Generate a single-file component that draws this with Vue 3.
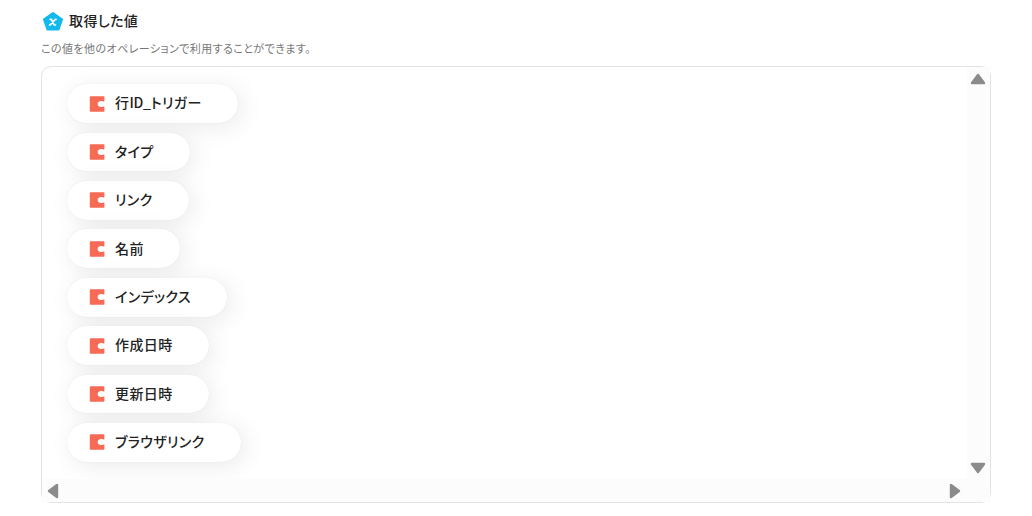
<script setup>
import { ref } from 'vue'

const values = ref([
  '行ID_トリガー',
  'タイプ',
  'リンク',
  '名前',
  'インデックス',
  '作成日時',
  '更新日時',
  'ブラウザリンク',
])

// Latin runs are set tighter than the Japanese text around them
const splitLatin = (text) => text.split(/([A-Za-z_]+)/).filter(Boolean)
const isLatin = (part) => /^[A-Za-z_]+$/.test(part)
</script>

<template>
  <section class="output">
    <header class="output-header">
      <svg class="output-icon" width="22" height="22" viewBox="0 0 22 22">
        <path
          d="M11 3.1 L19.9 9.3 L16.5 19.4 H5.5 L2.1 9.3 Z"
          fill="#12b9ec"
          stroke="#12b9ec"
          stroke-width="2.2"
          stroke-linejoin="round"
        />
        <path
          d="M8.2 9.3 H9.4 L12.2 15 H13.4 M14 9.3 H13.4 L8.2 15 H7.5"
          fill="none"
          stroke="#fff"
          stroke-width="1.7"
          stroke-linecap="round"
          stroke-linejoin="round"
        />
      </svg>
      <h2 class="output-title">取得した値</h2>
    </header>
    <p class="output-note">この値を他のオペレーションで利用することができます。</p>

    <div class="panel">
      <div class="panel-row">
        <ul class="value-list">
          <li v-for="value in values" :key="value" class="value-item">
            <svg class="value-icon" width="16" height="16" viewBox="0 0 16 16">
              <path
                d="M1.6 0.2 H14.7 Q15.4 0.2 15.4 0.9 V5.4 C14.3 5.4 13.6 4.9 12 4.9 C10 4.9 8.6 6.2 8.6 8 C8.6 9.8 10 11.1 12 11.1 C13.6 11.1 14.3 10.6 15.4 10.6 V15.1 Q15.4 15.8 14.7 15.8 H1.6 Q0.8 15.8 0.8 15 V1 Q0.8 0.2 1.6 0.2 Z"
                fill="#f76b56"
              />
            </svg>
            <span class="value-name"
              ><span v-for="(part, i) in splitLatin(value)" :key="i" :class="{ latin: isLatin(part) }">{{ part }}</span></span
            >
          </li>
        </ul>
        <div class="scrollbar scrollbar--vertical">
          <svg width="16" height="12" viewBox="0 0 16 12">
            <path d="M8 2 L14 10 H2 Z" />
          </svg>
          <svg width="16" height="12" viewBox="0 0 16 12">
            <path d="M8 10 L14 2 H2 Z" />
          </svg>
        </div>
      </div>
      <div class="scrollbar scrollbar--horizontal">
        <svg width="12" height="16" viewBox="0 0 12 16">
          <path d="M2 8 L10 2 V14 Z" />
        </svg>
        <svg width="12" height="16" viewBox="0 0 12 16">
          <path d="M10 8 L2 2 V14 Z" />
        </svg>
      </div>
    </div>
  </section>
</template>

<style>
body {
  margin: 0;
  background: #fff;
}
</style>

<style scoped>
.output {
  box-sizing: border-box;
  height: 516px;
  padding: 10px 41px 0;
  color: #222;
  font-family: 'Noto Sans CJK JP', sans-serif;
  font-feature-settings: 'palt';
}

.output-header {
  display: flex;
  align-items: center;
  gap: 5px;
  height: 22px;
  padding-left: 1px;
}

.output-icon {
  flex: none;
}

.output-title {
  margin: 0;
  padding-bottom: 2px;
  font-size: 14px;
  font-weight: 500;
  line-height: 20px;
  letter-spacing: 0.4px;
}

.output-note {
  margin: 8px 0 9px;
  color: #777;
  font-size: 11px;
  line-height: 17px;
  letter-spacing: 0.43px;
}

.panel {
  box-sizing: border-box;
  display: flex;
  flex-direction: column;
  width: 950px;
  height: 437px;
  border: 1px solid #e3e3e3;
  border-radius: 10px;
}

.panel-row {
  display: flex;
  flex: 1;
  min-height: 0;
}

.value-list {
  display: flex;
  flex: 1;
  flex-direction: column;
  align-items: flex-start;
  gap: 9.6px;
  margin: 0;
  padding: 17.3px 0 0 25px;
  list-style: none;
  overflow: hidden;
}

.value-item {
  box-sizing: border-box;
  display: flex;
  align-items: center;
  gap: 10px;
  height: 38.8px;
  padding: 0 36.4px 0 22px;
  border-radius: 20px;
  background: #fff;
  box-shadow: 0 0 1px rgba(0, 0, 0, 0.1), 4px 4px 24px rgba(0, 0, 0, 0.085);
}

.value-icon {
  flex: none;
}

.value-name {
  padding-bottom: 2.5px;
  font-size: 14px;
  font-weight: 500;
  line-height: 20px;
  letter-spacing: 0.4px;
  white-space: nowrap;
}

.latin {
  letter-spacing: -0.2px;
}

.scrollbar {
  display: flex;
  justify-content: space-between;
  box-sizing: border-box;
  background: #fcfcfc;
}

.scrollbar path {
  fill: #8b8b8b;
  stroke: #8b8b8b;
  stroke-width: 2.4;
  stroke-linejoin: round;
}

.scrollbar--vertical {
  flex-direction: column;
  align-items: center;
  width: 23px;
  padding: 6px 1px 5px 0;
}

.scrollbar--horizontal {
  align-items: center;
  height: 23px;
  padding: 0 29px 0 5px;
}
</style>
